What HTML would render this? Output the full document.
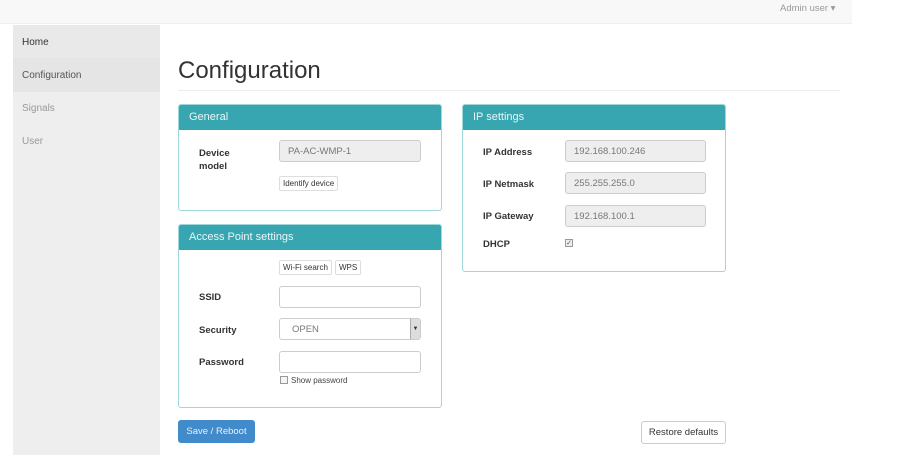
<!DOCTYPE html>
<html><head><style>
*{box-sizing:border-box;margin:0;padding:0}
body{width:924px;height:466px;background:#fff;font-family:"Liberation Sans",sans-serif;position:relative;overflow:hidden;color:#333}
.a{position:absolute}
.nav{left:0;top:0;width:852px;height:24px;background:#f8f8f8;border-bottom:1px solid #eee}
.side{left:13px;top:25px;width:147px;height:430px;background:#eee}
.si{position:absolute;left:9px;font-size:10px}
.panel{border:1px solid #9fd6da;border-radius:3px;background:#fff}
.ph{height:25px;background:#37a6b0;color:#e8f6f7;font-size:11px;padding:6px 10px;border-radius:2px 2px 0 0}
.lbl{font-size:9.5px;font-weight:bold;color:#333}
.inp{height:22px;border:1px solid #ccc;border-radius:3px;background:#fff;font-size:9.5px;color:#777;padding:5px 8px}
.ro{background:#eee}
.btn{border:1px solid #ddd;border-radius:2px;background:#fff;font-size:8px;padding:2px 3px;color:#333}
</style></head><body>
<div class="a nav"><span class="a" style="left:780px;top:3px;font-size:9.5px;color:#999">Admin user ▾</span></div>
<div class="a side">
<div class="a" style="left:0;top:0;width:147px;height:33px;background:#e9e9e9"></div>
<div class="a" style="left:0;top:33px;width:147px;height:34px;background:#e5e5e5"></div>
<span class="si" style="top:12px;color:#333">Home</span>
<span class="si" style="top:45px;color:#555">Configuration</span>
<span class="si" style="top:78px;color:#999">Signals</span>
<span class="si" style="top:111px;color:#999">User</span>
</div>
<div class="a" style="left:178px;top:57px;font-size:24px;color:#333">Configuration</div>
<div class="a" style="left:178px;top:90px;width:662px;height:1px;background:#eee"></div>

<div class="a panel" style="left:178px;top:104px;width:264px;height:107px"><div class="ph">General</div></div>
<div class="a lbl" style="left:199px;top:147px;line-height:13px">Device<br>model</div>
<div class="a inp ro" style="left:279px;top:140px;width:142px">PA-AC-WMP-1</div>
<div class="a btn" style="left:279px;top:176px">Identify device</div>

<div class="a panel" style="left:178px;top:224px;width:264px;height:184px"><div class="ph">Access Point settings</div></div>
<div class="a btn" style="left:279px;top:260px">Wi-Fi search</div>
<div class="a btn" style="left:335px;top:260px">WPS</div>
<div class="a lbl" style="left:199px;top:292px">SSID</div>
<div class="a inp" style="left:279px;top:286px;width:142px"></div>
<div class="a lbl" style="left:199px;top:325px">Security</div>
<div class="a inp" style="left:279px;top:318px;width:142px;padding-left:12px">OPEN</div>
<div class="a" style="left:410px;top:319px;width:10px;height:20px;background:#ddd;border-left:1px solid #aaa;font-size:6px;text-align:center;line-height:20px">▼</div>
<div class="a lbl" style="left:199px;top:357px">Password</div>
<div class="a inp" style="left:279px;top:351px;width:142px"></div>
<div class="a" style="left:280px;top:376px;width:8px;height:8px;border:1px solid #999;background:#f4f4f4"></div>
<div class="a" style="left:291px;top:376px;font-size:8px;color:#444">Show password</div>

<div class="a panel" style="left:462px;top:104px;width:264px;height:168px"><div class="ph">IP settings</div></div>
<div class="a lbl" style="left:483px;top:147px">IP Address</div>
<div class="a inp ro" style="left:565px;top:140px;width:141px">192.168.100.246</div>
<div class="a lbl" style="left:483px;top:179px">IP Netmask</div>
<div class="a inp ro" style="left:565px;top:172px;width:141px">255.255.255.0</div>
<div class="a lbl" style="left:483px;top:211px">IP Gateway</div>
<div class="a inp ro" style="left:565px;top:205px;width:141px">192.168.100.1</div>
<div class="a lbl" style="left:483px;top:239px">DHCP</div>
<div class="a" style="left:565px;top:239px;width:8px;height:8px;border:1px solid #999;background:#eee;font-size:7px;line-height:7px;text-align:center;color:#555">✓</div>

<div class="a" style="left:178px;top:420px;width:77px;height:23px;background:#428bca;border-radius:3px;color:#e8f0fa;font-size:9.5px;text-align:center;line-height:23px">Save / Reboot</div>
<div class="a" style="left:641px;top:421px;width:85px;height:23px;border:1px solid #ccc;border-radius:3px;color:#333;font-size:9.5px;text-align:center;line-height:21px">Restore defaults</div>
</body></html>
